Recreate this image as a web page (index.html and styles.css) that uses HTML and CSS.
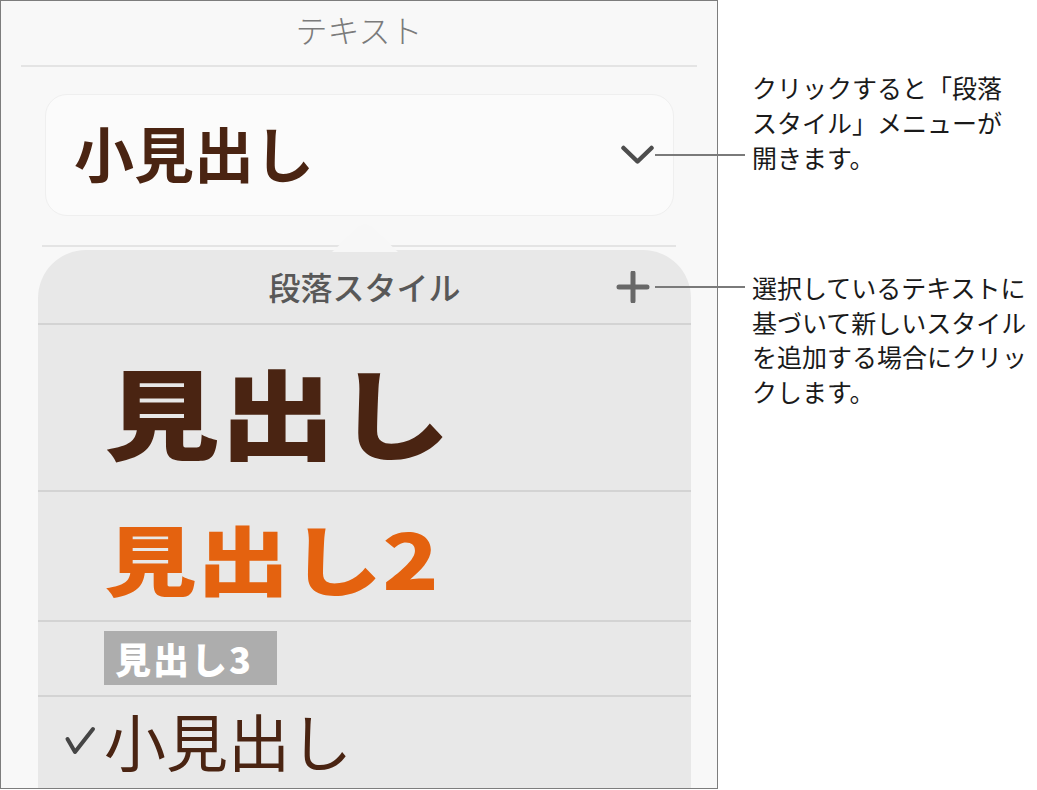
FILE: index.html
```html
<!DOCTYPE html>
<html lang="ja">
<head>
<meta charset="utf-8">
<title>段落スタイル</title>
<link rel="stylesheet" href="styles.css">
</head>
<body>
<div class="page">
  <div class="panel">
    <div class="title">テキスト</div>
    <div class="sep sep-top"></div>
    <div class="dropdown">
      <span class="dd-label">小見出し</span>
      <svg class="chev" width="33" height="20" viewBox="0 0 33 20"><path d="M2.5 3 L16.5 16.5 L30.5 3"/></svg>
    </div>
    <div class="sep sep-mid"></div>
    <div class="popover">
      <svg class="arrow" width="66" height="29" viewBox="0 0 66 29"><path d="M0 29 L27 3.5 Q33 -1.5 39 3.5 L66 29 Z"/></svg>
      <div class="pop-head">
        <span></span>
        <span class="pop-title">段落スタイル</span>
        <svg class="plus" width="34" height="32" viewBox="0 0 34 32"><path d="M3 16 H31 M17 2 V30"/></svg>
      </div>
      <div class="row row-h1"><span class="h1">見出し</span></div>
      <div class="row row-h2"><span class="h2">見出し2</span></div>
      <div class="row row-h3"><span class="h3"><span class="h3-text">見出し3</span></span></div>
      <div class="row row-sub">
        <svg class="check" width="33" height="30" viewBox="0 0 33 30"><path d="M4.5 13 L12 26 L30 3"/></svg>
        <span class="sub">小見出し</span>
      </div>
    </div>
  </div>
  <div class="notes">
    <p class="note note1">クリックすると「段落<br>スタイル」メニューが<br>開きます。</p>
    <p class="note note2">選択しているテキストに<br>基づいて新しいスタイル<br>を追加する場合にクリッ<br>クします。</p>
  </div>
  <div class="leader leader-1"></div>
  <div class="leader leader-2"></div>
</div>
</body>
</html>
```

FILE: styles.css
```css
* { box-sizing: border-box; }
html, body { margin: 0; padding: 0; background: #ffffff; }
body { font-family: "Noto Sans CJK JP", "Noto Sans", sans-serif; }

.page {
  position: relative;
  display: flex;
  width: 1037px;
  height: 790px;
}

.panel {
  width: 718px;
  height: 789px;
  border: 1px solid #7d7d7d;
  background: #f8f8f8;
  overflow: hidden;
  display: flex;
  flex-direction: column;
  flex-shrink: 0;
}
.panel > * { flex: none; }

.title {
  height: 64px;
  padding-bottom: 8px;
  display: flex;
  align-items: center;
  justify-content: center;
  font-size: 32px;
  line-height: 1;
  font-weight: 300;
  color: #7b7b7b;
}

.sep { height: 2px; background: #e4e4e4; }
.sep-top { margin: 0 20px; }
.sep-mid { margin: 29px 41px 0 41px; }

.dropdown {
  margin: 27px 0 0 44px;
  width: 629px;
  height: 122px;
  border: 1px solid #efefef;
  border-radius: 22px;
  background: #fbfbfb;
  display: flex;
  align-items: center;
  justify-content: space-between;
  padding: 0 19px 0 28px;
}
.dd-label {
  font-size: 60px;
  line-height: 1;
  font-weight: 700;
  color: #4a2412;
  padding-bottom: 6px;
}
.chev path { fill: none; stroke: #4d4d4d; stroke-width: 4.5; stroke-linecap: round; stroke-linejoin: round; }

.popover {
  position: relative;
  margin: 3px 0 0 37px;
  width: 653px;
  background: #e8e8e8;
  border-radius: 48px 48px 0 0;
}
.arrow {
  position: absolute;
  left: 294px;
  top: -27px;
  display: block;
}
.arrow path { fill: #f7f7f7; }

.pop-head {
  height: 75px;
  border-bottom: 2px solid #d3d3d3;
  display: grid;
  grid-template-columns: 1fr auto 1fr;
  align-items: center;
}
.pop-title {
  font-size: 32px;
  line-height: 1;
  font-weight: 500;
  color: #585858;
  padding-bottom: 2px;
}
.plus { justify-self: end; margin-right: 41px; }
.plus path { fill: none; stroke: #686868; stroke-width: 5; stroke-linecap: round; }

.row {
  display: flex;
  align-items: center;
  padding-left: 66px;
  border-bottom: 2px solid #d3d3d3;
}
.row-h1 { height: 167px; padding-top: 2px; }
.row-h2 { height: 130px; padding-top: 2px; }
.row-h3 { height: 75px; padding-bottom: 2px; }
.row-sub { height: 120px; padding-left: 25px; align-items: flex-start; padding-top: 12px; border-bottom: none; }

.h1 {
  display: inline-block;
  font-size: 98px;
  line-height: 1;
  font-weight: 900;
  color: #4a2412;
  transform: scaleX(1.18);
  transform-origin: left center;
}
.h2 {
  display: inline-block;
  font-size: 76px;
  line-height: 1;
  font-weight: 900;
  color: #e4620f;
  transform: scaleX(1.22);
  transform-origin: left center;
}
.h3 {
  display: inline-flex;
  align-items: center;
  height: 54px;
  width: 173px;
  padding-left: 11px;
  background: #adadad;
}
.h3-text {
  font-size: 36px;
  line-height: 1;
  font-weight: 900;
  color: #ffffff;
  letter-spacing: 2px;
}

.check { margin-top: 17px; margin-right: 8px; }
.check path { fill: none; stroke: #454545; stroke-width: 4; stroke-linecap: round; stroke-linejoin: round; }
.sub {
  font-size: 62px;
  line-height: 1;
  font-weight: 400;
  color: #4a2412;
}

.notes {
  padding: 70px 0 0 34px;
  display: flex;
  flex-direction: column;
}
.note {
  margin: 0;
  font-size: 25px;
  line-height: 35px;
  color: #1a1a1a;
  white-space: nowrap;
}
.note2 { margin-top: 95px; line-height: 34.5px; }

.leader {
  position: absolute;
  left: 655px;
  width: 90px;
  height: 2px;
  background: #7a7a7a;
}
.leader-1 { top: 154px; }
.leader-2 { top: 286px; }
```
